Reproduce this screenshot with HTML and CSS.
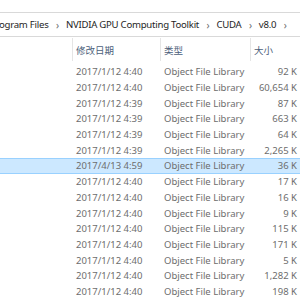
FILE: index.html
```html
<!DOCTYPE html>
<html>
<head>
<meta charset="utf-8">
<link rel="stylesheet" href="styles.css">
</head>
<body>
<div class="top"></div>
<div class="crumbs">
  <span class="crumb first">ogram Files</span><span class="sep">›</span>
  <span class="crumb">NVIDIA GPU Computing Toolkit</span><span class="sep">›</span>
  <span class="crumb">CUDA</span><span class="sep">›</span>
  <span class="crumb">v8.0</span><span class="sep">›</span>
</div>
<div class="gap"></div>
<div class="header">
  <div class="hcell name"></div>
  <div class="hcell">修改日期</div>
  <div class="hcell">类型</div>
  <div class="hcell">大小</div>
</div>
<div class="rows">
  <div class="row"><span></span><span>2017/1/12 4:40</span><span>Object File Library</span><span class="size">92 K</span></div>
  <div class="row"><span></span><span>2017/1/12 4:40</span><span>Object File Library</span><span class="size">60,654 K</span></div>
  <div class="row"><span></span><span>2017/1/12 4:39</span><span>Object File Library</span><span class="size">87 K</span></div>
  <div class="row"><span></span><span>2017/1/12 4:39</span><span>Object File Library</span><span class="size">663 K</span></div>
  <div class="row"><span></span><span>2017/1/12 4:39</span><span>Object File Library</span><span class="size">64 K</span></div>
  <div class="row"><span></span><span>2017/1/12 4:39</span><span>Object File Library</span><span class="size">2,265 K</span></div>
  <div class="row selected"><span></span><span>2017/4/13 4:59</span><span>Object File Library</span><span class="size">36 K</span></div>
  <div class="row"><span></span><span>2017/1/12 4:40</span><span>Object File Library</span><span class="size">17 K</span></div>
  <div class="row"><span></span><span>2017/1/12 4:40</span><span>Object File Library</span><span class="size">16 K</span></div>
  <div class="row"><span></span><span>2017/1/12 4:40</span><span>Object File Library</span><span class="size">9 K</span></div>
  <div class="row"><span></span><span>2017/1/12 4:40</span><span>Object File Library</span><span class="size">115 K</span></div>
  <div class="row"><span></span><span>2017/1/12 4:40</span><span>Object File Library</span><span class="size">171 K</span></div>
  <div class="row"><span></span><span>2017/1/12 4:40</span><span>Object File Library</span><span class="size">5 K</span></div>
  <div class="row"><span></span><span>2017/1/12 4:40</span><span>Object File Library</span><span class="size">1,282 K</span></div>
  <div class="row"><span></span><span>2017/1/12 4:40</span><span>Object File Library</span><span class="size">198 K</span></div>
</div>
</body>
</html>
```
FILE: styles.css
```css
html, body {
  margin: 0;
  padding: 0;
  background: #fff;
  width: 300px;
  height: 300px;
  overflow: hidden;
  font-family: "Noto Sans", "Open Sans", "Noto Sans CJK SC", sans-serif;
}
.top {
  height: 12px;
}
.crumbs {
  height: 23px;
  border-top: 1px solid #d9d9d9;
  border-bottom: 1px solid #d9d9d9;
  display: flex;
  align-items: center;
  white-space: nowrap;
  font-size: 9.6px;
  letter-spacing: -0.25px;
  color: #1e1e1e;
  overflow: hidden;
}
.crumb.first {
  margin-left: -1px;
}
.sep {
  color: #6e6e6e;
  font-size: 10px;
  margin: 0 7px 0 7.5px;
}
.gap {
  height: 1px;
}
.header {
  display: grid;
  grid-template-columns: 72px 88px 90px 50px;
  height: 23px;
}
.hcell {
  border-left: 1px solid #e5e5e5;
  padding-left: 3px;
  display: flex;
  align-items: center;
  font-family: "Noto Sans CJK SC", sans-serif;
  font-size: 9.5px;
  color: #4c607a;
}
.hcell.name {
  border-left: none;
}
.rows {
  padding-top: 3px;
}
.row {
  display: grid;
  grid-template-columns: 72px 88px 90px 50px;
  height: 15.7px;
  align-items: center;
  font-size: 9.5px;
  color: #6d6d6d;
  white-space: nowrap;
  box-sizing: border-box;
}
.row span {
  padding-left: 4px;
}
.row .size {
  text-align: right;
  padding-right: 3px;
}
.row.selected {
  background: #cce8ff;
  border-top: 1px solid #99d1ff;
  border-bottom: 1px solid #99d1ff;
}
```
